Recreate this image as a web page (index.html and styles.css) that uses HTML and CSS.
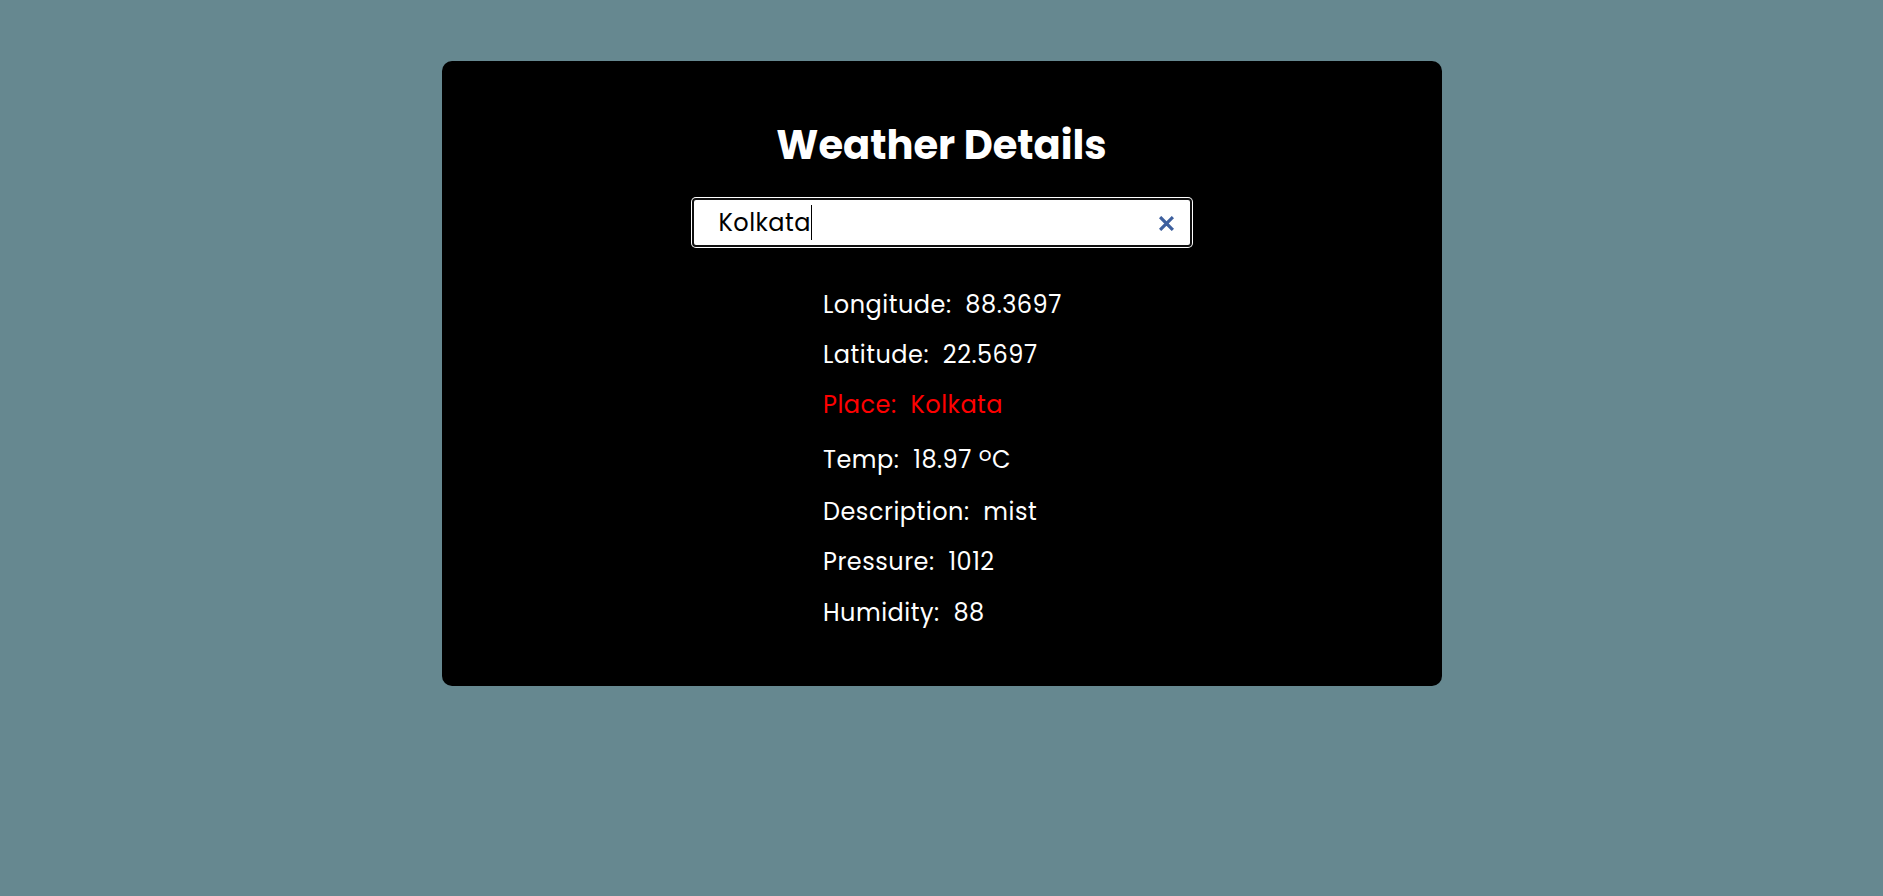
FILE: index.html
```html
<!DOCTYPE html>
<html lang="en">
<head>
<meta charset="utf-8">
<title>Weather Details</title>
<link rel="stylesheet" href="styles.css">
</head>
<body>
<main class="card">
  <h1 class="title">Weather Details</h1>
  <div class="search">
    <div class="search-value"><span class="search-text">Kolkata</span><span class="caret"></span></div>
    <svg class="clear" width="15" height="15" viewBox="0 0 15 15" aria-hidden="true">
      <path d="M2.2 2.2 L12.8 12.8 M12.8 2.2 L2.2 12.8" stroke="currentColor" stroke-width="3.2" stroke-linecap="square"/>
    </svg>
  </div>
  <div class="details">
    <div class="row">Longitude:&nbsp; 88.3697</div>
    <div class="row">Latitude:&nbsp; 22.5697</div>
    <div class="row place">Place:&nbsp; Kolkata</div>
    <div class="row temp">Temp:&nbsp; 18.97 <span class="deg">o</span>C</div>
    <div class="row desc">Description:&nbsp; mist</div>
    <div class="row">Pressure:&nbsp; 1012</div>
    <div class="row hum">Humidity:&nbsp; 88</div>
  </div>
</main>
</body>
</html>
```
FILE: styles.css
```css
html, body {
  margin: 0;
  padding: 0;
}

body {
  background: #668890;
  font-family: "Poppins", "Open Sans", sans-serif;
  min-height: 100vh;
}

.card {
  box-sizing: border-box;
  width: 1000px;
  height: 625px;
  margin: 61px auto 0;
  background: #000;
  border-radius: 10px;
  padding-top: 59px;
  display: flex;
  flex-direction: column;
  align-items: center;
  color: #fff;
}

.title {
  margin: 0;
  font-size: 40px;
  line-height: 50px;
  font-weight: 700;
  color: #fff;
}

.search {
  box-sizing: border-box;
  width: 500px;
  height: 49px;
  margin-top: 28px;
  background: #fff;
  border: 2px solid #101010;
  border-radius: 4px;
  box-shadow: 0 0 0 1px #fff;
  display: flex;
  align-items: center;
  justify-content: space-between;
  padding: 0 16px 0 25px;
  color: #000;
}

.search-value {
  font-size: 24px;
  line-height: 45px;
  letter-spacing: 0.45px;
  display: flex;
  align-items: baseline;
}

.caret {
  display: inline-block;
  width: 1px;
  height: 35px;
  background: #000;
  align-self: center;
}

.clear {
  color: #3d5f9e;
  margin-top: 2px;
  flex: none;
}

.details {
  margin-top: 33px;
  display: flex;
  flex-direction: column;
  align-items: flex-start;
  width: 237px;
}

.row {
  font-size: 24px;
  line-height: 50px;
  letter-spacing: 0.5px;
  white-space: nowrap;
}

.place {
  color: #ff0000;
}

.temp {
  margin-top: 5px;
}

.deg {
  font-size: 20px;
  vertical-align: 7px;
  line-height: 0;
}

.desc {
  margin-top: 2px;
}

.hum {
  margin-top: 1px;
}
```
